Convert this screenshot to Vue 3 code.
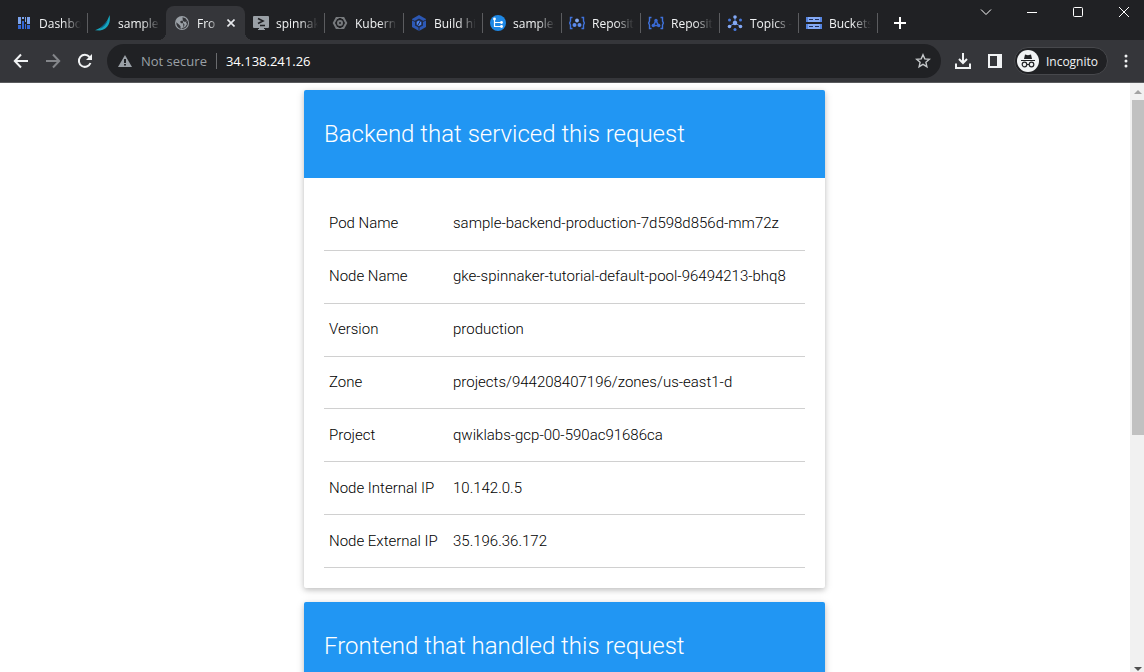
<script setup>
import { ref } from 'vue'

const tabs = [
  { title: 'Dashbo', icon: 'dashboard' },
  { title: 'sample', icon: 'sail' },
  { title: 'Fro', icon: 'globe', active: true },
  { title: 'spinnak', icon: 'shell' },
  { title: 'Kubern', icon: 'hex' },
  { title: 'Build hi', icon: 'build' },
  { title: 'sample-', icon: 'source' },
  { title: 'Reposit', icon: 'repo' },
  { title: 'Reposit', icon: 'repoTri' },
  { title: 'Topics -', icon: 'topics' },
  { title: 'Buckets', icon: 'buckets' }
]
const address = ref('34.138.241.26')
const rows = [
  ['Pod Name', 'sample-backend-production-7d598d856d-mm72z'],
  ['Node Name', 'gke-spinnaker-tutorial-default-pool-96494213-bhq8'],
  ['Version', 'production'],
  ['Zone', 'projects/944208407196/zones/us-east1-d'],
  ['Project', 'qwiklabs-gcp-00-590ac91686ca'],
  ['Node Internal IP', '10.142.0.5'],
  ['Node External IP', '35.196.36.172']
]
</script>

<template>
  <div class="browser">
    <header class="tabstrip">
      <div class="tabs">
        <div v-for="(tab, i) in tabs" :key="i" class="tab" :class="{ active: tab.active, before: i === 1 }">
          <button class="tab-main" type="button">
            <svg class="favicon" viewBox="0 0 16 16" aria-hidden="true">
              <g v-if="tab.icon === 'dashboard'">
                <path fill="#7ba3ec" d="M2 2h3v7H2zM6 2h2v2H6zM9 2h1v5H9zM11 2h3v7h-3z" />
                <path fill="#3367d6" d="M2 10h3v4H2zM6 6h2v8H6zM9 9h1v5H9zM11 10h3v4h-3z" />
              </g>
              <g v-else-if="tab.icon === 'sail'">
                <path fill="#16a5bd" d="M14.500 0C16 7 13.500 14 5 15.500L0 15.300C8 12 12 8 14.500 0z" />
                <path fill="#0b5f86" d="M13 5c-1.500 4-4 7-8 9 2-3 5-6 8-9z" />
              </g>
              <g v-else-if="tab.icon === 'globe'">
                <circle cx="8" cy="8" r="7" fill="#9aa0a6" />
                <path fill="#35363a" d="M8.500 2.300l3 1 1.600 2.200-.8 1.200H10l-1-1H7.300L6 6.700l1 1.500h2.500l1 1.200-.4 2-1.600 1.500-1 .8-1-.5v-2L5 9.600 2.300 7.200l.2 2.600A6 6 0 0 0 8 14a6 6 0 0 0 6-6 6 6 0 0 0-.6-2.400L12 7.500l1 1.500-1.500 2.500-2 1.600z" fill-rule="evenodd" />
              </g>
              <g v-else-if="tab.icon === 'shell'">
                <path fill="#9aa0a6" d="M1 1h14a1 1 0 0 1 1 1v10a1 1 0 0 1-1 1h-4v1h1v1H5v-1h1v-1H1a1 1 0 0 1-1-1V2a1 1 0 0 1 1-1z" />
                <path d="M5 3.500l5 2.500-5 2.500M7 10.500h5" fill="none" stroke="#202124" stroke-width="1.600" />
              </g>
              <g v-else-if="tab.icon === 'hex'" fill="none" stroke="#777a7d">
                <path d="M6.500 3H4.500L1.800 8l2.700 5h2M9.500 3h2l2.700 5-2.700 5h-2" stroke-width="2" />
                <path d="M4 2.500h8M4 13.500h8" stroke-width="1" />
                <circle cx="8" cy="8" r="2" stroke-width="2" />
              </g>
              <g v-else-if="tab.icon === 'build'">
                <path d="M8 0l7 4v8l-7 4-7-4V4z" fill="#2c58b4" />
                <path d="M8 3.500l4 2.300v4.600l-4 2.300-4-2.300V5.800z" fill="#202a45" />
                <path d="M8 5.500l2.300 1.200v3L8 11l-2.300-1.300v-3z" fill="#4d86f3" />
                <path d="M7 10l2.300-4M1 5l3 1.500M8 12v4M12 6.500L15 5" stroke="#202a45" />
              </g>
              <g v-else-if="tab.icon === 'source'">
                <circle cx="8" cy="8" r="8" fill="#1e88e5" />
                <path d="M4.500 4v7.500H11M4.500 7.500H11" fill="none" stroke="#fff" stroke-width="1.200" />
                <circle cx="4.500" cy="4" r="1.400" fill="#fff" />
                <circle cx="11.500" cy="7.500" r="1.400" fill="#fff" />
                <circle cx="11.500" cy="11.500" r="1.400" fill="#fff" />
              </g>
              <g v-else-if="tab.icon === 'repo'">
                <path d="M3.500 2.500H1.500V6L.6 8l.9 2v3.500h2M12.500 2.500h2V6l.9 2-.9 2v3.500h-2" fill="none" stroke="#3f73dd" stroke-width="1.400" />
                <circle cx="8" cy="5.500" r="1.900" fill="#83a9f5" />
                <circle cx="5.500" cy="10" r="2" fill="#5b8bee" />
                <circle cx="10.500" cy="10" r="2" fill="#5b8bee" />
              </g>
              <g v-else-if="tab.icon === 'repoTri'">
                <path d="M3.500 2.500H1.500V6L.6 8l.9 2v3.500h2M12.500 2.500h2V6l.9 2-.9 2v3.500h-2" fill="none" stroke="#3f73dd" stroke-width="1.400" />
                <path d="M8 5.500L10.500 10.500h-5z" fill="none" stroke="#3969d3" stroke-width="1.600" />
                <circle cx="8" cy="5.500" r="1.700" fill="#3969d3" />
                <circle cx="5.300" cy="10.500" r="1.700" fill="#3969d3" />
                <circle cx="10.700" cy="10.500" r="1.700" fill="#3969d3" />
              </g>
              <g v-else-if="tab.icon === 'topics'">
                <path d="M8 8V2M8 8l-5 3M8 8l5 3" stroke="#5584df" />
                <g fill="#83a9f5">
                  <circle cx="8" cy="8" r="2.300" /><circle cx="8" cy="2" r="1.800" />
                  <circle cx="2.500" cy="11.500" r="1.800" /><circle cx="13.500" cy="11.500" r="1.800" />
                </g>
                <g fill="#4778dc">
                  <circle cx="2.500" cy="5" r="1.500" /><circle cx="13.500" cy="5" r="1.500" /><circle cx="8" cy="14.500" r="1.500" />
                </g>
              </g>
              <g v-else>
                <path fill="#83a9f5" d="M0 2h16v5H0zM0 9h16v5H0z" />
                <path fill="#5584df" d="M0 2h2v5H0zM14 2h2v5h-2zM0 9h2v5H0zM14 9h2v5h-2z" />
                <path stroke="#202f59" stroke-width="1" d="M3 4.500h4M9 4.500h4M3 11.500h4M9 11.500h4" />
              </g>
            </svg>
            <span class="tab-title">{{ tab.title }}</span>
          </button>
          <button v-if="tab.active" class="tab-close" type="button" aria-label="Close tab">
            <svg viewBox="0 0 8 8"><path d="M0.500 0.500l7 7M7.500 0.500l-7 7" stroke="#e8eaed" stroke-width="1.600" /></svg>
          </button>
        </div>
        <button class="new-tab" type="button" aria-label="New tab">
          <svg viewBox="0 0 12 12"><path d="M6 0v12M0 6h12" stroke="#fff" stroke-width="2" /></svg>
        </button>
      </div>
      <div class="window-controls">
        <button type="button" aria-label="Search tabs"><svg viewBox="0 0 12 12"><path d="M1 3.500l5 5 5-5" /></svg></button>
        <button type="button" aria-label="Minimize"><svg viewBox="0 0 12 12"><path d="M1 6.500h10" /></svg></button>
        <button type="button" aria-label="Maximize"><svg viewBox="0 0 12 12"><rect x="1.500" y="1.500" width="9" height="9" rx="1" /></svg></button>
        <button type="button" aria-label="Close window"><svg viewBox="0 0 12 12"><path d="M1 1l10 10M11 1L1 11" /></svg></button>
      </div>
    </header>

    <nav class="toolbar" aria-label="Browser toolbar">
      <div class="nav-buttons">
        <button type="button" aria-label="Back"><svg viewBox="0 0 16 16"><path d="M15 8H2M8 1.500L1.800 8 8 14.500" stroke="#f1f3f4" /></svg></button>
        <button type="button" aria-label="Forward"><svg viewBox="0 0 16 16"><path d="M1 8h13M8 1.500L14.200 8 8 14.500" stroke="#84868a" /></svg></button>
        <button type="button" aria-label="Reload"><svg viewBox="0 0 16 16"><path d="M13.500 10A6 6 0 1 1 12.500 4" stroke="#f1f3f4" /><path d="M15 1v6H9z" fill="#f1f3f4" /></svg></button>
      </div>
      <div class="omnibox">
        <svg class="warning" viewBox="0 0 14 12" aria-hidden="true">
          <path fill="#9aa0a6" d="M7 0l7 12H0z" />
          <path fill="#202124" d="M6 4h2v4H6zM6 9h2v1.500H6z" />
        </svg>
        <label class="security" for="address">Not secure</label>
        <input id="address" v-model="address" class="address" type="text" />
        <button class="star" type="button" aria-label="Bookmark this page">
          <svg viewBox="0 0 16 16"><path d="M8 1.800l1.800 4.100 4.500.4-3.400 3 1 4.400L8 11.400l-3.900 2.300 1-4.400-3.400-3 4.500-.4z" fill="none" stroke="#c4c7c9" stroke-width="1.400" /></svg>
        </button>
      </div>
      <button class="tool download" type="button" aria-label="Downloads">
        <svg viewBox="0 0 16 16"><path d="M8 0v10M4 6l4 4 4-4M1 10.500V15h14v-4.500" fill="none" stroke="#f1f3f4" stroke-width="2" /></svg>
      </button>
      <button class="tool panel" type="button" aria-label="Side panel">
        <svg viewBox="0 0 16 16"><path fill="#f1f3f4" fill-rule="evenodd" d="M1 1h14v14H1zM3 3v10h7V3z" /></svg>
      </button>
      <button class="incognito" type="button">
        <svg viewBox="0 0 22 22" aria-hidden="true">
          <circle cx="11" cy="11" r="11" fill="#f1f3f4" />
          <path fill="#202124" d="M8 4.500l3 .7 3-.7 1 4.500H7zM4 10h14v1H4z" />
          <g fill="none" stroke="#202124" stroke-width="1.200"><circle cx="7.500" cy="14.500" r="2.300" /><circle cx="14.500" cy="14.500" r="2.300" /><path d="M10 14.500h2" /></g>
        </svg>
        <span>Incognito</span>
      </button>
      <button class="menu" type="button" aria-label="Menu">
        <svg viewBox="0 0 4 14"><g fill="#f1f3f4"><circle cx="2" cy="2" r="1.500" /><circle cx="2" cy="7" r="1.500" /><circle cx="2" cy="12" r="1.500" /></g></svg>
      </button>
    </nav>

    <div class="viewport">
      <main class="page">
        <section class="card">
          <h1 class="card-head">Backend that serviced this request</h1>
          <div class="card-body">
            <table>
              <tbody>
                <tr v-for="row in rows" :key="row[0]">
                  <th scope="row">{{ row[0] }}</th>
                  <td>{{ row[1] }}</td>
                </tr>
              </tbody>
            </table>
          </div>
        </section>
        <section class="card">
          <h1 class="card-head">Frontend that handled this request</h1>
        </section>
      </main>
      <div class="scrollbar" aria-hidden="true">
        <svg viewBox="0 0 8 4"><path fill="#a3a3a3" d="M0 4l4-4 4 4z" /></svg>
        <div class="track"><div class="thumb"></div></div>
        <svg viewBox="0 0 8 4"><path fill="#505050" d="M0 0l4 4 4-4z" /></svg>
      </div>
    </div>
  </div>
</template>

<style>
body {
  margin: 0;
  background: #fff;
}
</style>

<style scoped>
.browser {
  display: flex;
  flex-direction: column;
  height: 100vh;
  overflow: hidden;
  font-family: "Open Sans", "Noto Sans", sans-serif;
}
* {
  box-sizing: border-box;
}
button {
  display: flex;
  align-items: center;
  justify-content: center;
  margin: 0;
  padding: 0;
  border: 0;
  background: none;
  color: inherit;
  font: inherit;
}
svg {
  display: block;
  flex: none;
}
.tabstrip {
  display: flex;
  justify-content: space-between;
  flex: none;
  height: 40px;
  background: #202124;
  color: #f1f3f4;
}
.tabs {
  display: flex;
  padding: 6px 0 0 8px;
}
.tab {
  position: relative;
  display: flex;
  align-items: center;
  width: 79px;
  height: 34px;
  padding: 0 6px 0 8px;
  font-size: 12px;
}
.tab::after {
  content: "";
  position: absolute;
  right: -1px;
  top: 7px;
  width: 1px;
  height: 20px;
  background: #5b5c5f;
}
.tab.active::after,
.tab.before::after {
  display: none;
}
.tab.active {
  border-radius: 8px 8px 0 0;
  background: #35363a;
}
.tab.active::before {
  content: "";
  position: absolute;
  left: -8px;
  right: -8px;
  bottom: 0;
  height: 8px;
  background:
    radial-gradient(circle at 0 0, transparent 8px, #35363a 8px) left / 8px 8px no-repeat,
    radial-gradient(circle at 100% 0, transparent 8px, #35363a 8px) right / 8px 8px no-repeat;
}
.tab-main {
  flex: 1;
  min-width: 0;
  justify-content: flex-start;
  gap: 7px;
}
.favicon {
  width: 16px;
  height: 16px;
}
.tab-title {
  flex: 1;
  min-width: 0;
  white-space: nowrap;
  text-align: left;
  -webkit-mask-image: linear-gradient(to left, transparent, #000 18px);
  mask-image: linear-gradient(to left, transparent, #000 18px);
}
.active .tab-title {
  -webkit-mask-image: linear-gradient(to left, transparent, #000 10px);
  mask-image: linear-gradient(to left, transparent, #000 10px);
}
.tab-close {
  width: 16px;
  height: 16px;
  margin-left: 4px;
}
.tab-close svg {
  width: 8px;
  height: 8px;
}
.new-tab {
  width: 28px;
  height: 34px;
  margin-left: 9px;
}
.new-tab svg {
  width: 12px;
  height: 12px;
}
.window-controls {
  display: flex;
  gap: 6px;
  height: 24px;
}
.window-controls button {
  width: 40px;
  height: 24px;
}
.window-controls svg {
  width: 12px;
  height: 12px;
  fill: none;
  stroke: #fff;
}
.toolbar {
  display: flex;
  align-items: center;
  flex: none;
  height: 43px;
  padding: 0 16px 0 13px;
  border-bottom: 1px solid #5a5b5e;
  background: #35363a;
  color: #f1f3f4;
}
.nav-buttons {
  display: flex;
  gap: 16px;
}
.nav-buttons svg {
  width: 16px;
  height: 16px;
  fill: none;
  stroke-width: 2;
}
.omnibox {
  display: flex;
  align-items: center;
  flex: 1;
  height: 34px;
  margin-left: 14px;
  padding: 0 10px 0 11px;
  border-radius: 17px;
  background: #202124;
  font-size: 13px;
}
.warning {
  width: 14px;
  height: 12px;
}
.security {
  margin-left: 9px;
  padding-right: 9px;
  border-right: 1px solid #6a6b6e;
  color: #9aa0a6;
  line-height: 16px;
  white-space: nowrap;
}
.address {
  flex: 1;
  min-width: 0;
  height: 24px;
  padding: 0 0 0 9px;
  border: 0;
  outline: 0;
  background: none;
  color: #fff;
  font: inherit;
}
.star svg,
.tool svg {
  width: 16px;
  height: 16px;
}
.download {
  margin-left: 14px;
}
.panel {
  margin-left: 16px;
}
.incognito {
  height: 28px;
  margin-left: 11px;
  padding: 0 9px 0 2px;
  gap: 7px;
  border: 1px solid #47484c;
  border-radius: 14px;
  background: #202124;
  font-size: 12px;
}
.incognito svg {
  width: 22px;
  height: 22px;
}
.menu {
  margin-left: 16px;
}
.menu svg {
  width: 4px;
  height: 14px;
}
.viewport {
  display: flex;
  flex: 1;
  min-height: 0;
  background: #fff;
}
.page {
  flex: 1;
  min-width: 0;
  overflow: hidden;
  padding: 7px 1px 0 0;
  font-family: Roboto, "Liberation Sans", sans-serif;
}
.card {
  width: 521px;
  max-width: 100%;
  margin: 0 auto 14px;
  border-radius: 2px;
  background: #fff;
  box-shadow: 0 2px 5px 0 rgba(0, 0, 0, 0.16), 0 2px 10px 0 rgba(0, 0, 0, 0.12);
}
.card-head {
  margin: 0;
  padding: 20px;
  border-radius: 2px 2px 0 0;
  background: #2196f3;
  color: #fff;
  font-size: 24px;
  font-weight: 300;
  line-height: 48px;
}
.card-body {
  padding: 20px;
}
table {
  width: 100%;
  height: 370px;
  border-collapse: collapse;
  color: #000;
  font-size: 15px;
  line-height: 21px;
}
tr {
  border-bottom: 1px solid #d0d0d0;
}
th,
td {
  padding: 15px 5px;
  font-weight: 300;
  text-align: left;
}
th {
  width: 124px;
  white-space: nowrap;
}
.scrollbar {
  display: flex;
  flex-direction: column;
  align-items: center;
  flex: none;
  width: 14px;
  padding: 7px 0 1px 2px;
  background: #f1f1f1;
}
.scrollbar svg {
  width: 8px;
  height: 4px;
}
.track {
  flex: 1;
  width: 100%;
  padding-top: 6px;
}
.thumb {
  height: 59%;
  background: #c1c1c1;
}
</style>
